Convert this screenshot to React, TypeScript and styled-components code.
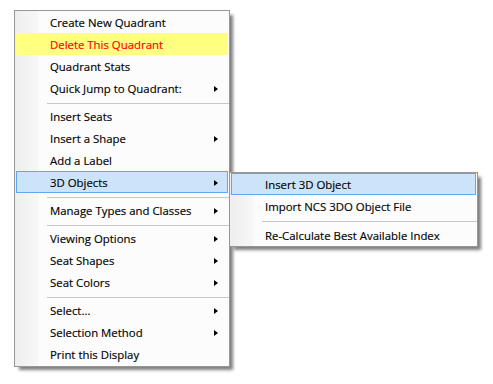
import React from "react";
import styled, { createGlobalStyle, css } from "styled-components";

const Global = createGlobalStyle`
  html, body { margin: 0; padding: 0; background: #ffffff; }
  body { width: 493px; height: 384px; overflow: hidden; }
`;

const Page = styled.div`
  padding: 10px 0 0 14px;
  font-family: "Open Sans", "Noto Sans", sans-serif;
  font-size: 11.4px;
  color: #000;
`;

const Menu = styled.div<{ $width: number; $padBottom: number }>`
  position: relative;
  box-sizing: border-box;
  width: ${(p) => p.$width}px;
  padding-bottom: ${(p) => p.$padBottom}px;
  border: 1px solid #979797;
  background: linear-gradient(to right, #eeeeee 0, #f7f7f7 23px, #fcfcfc 24px, #fcfcfc 100%);
  box-shadow: 4px 4px 3px -1px rgba(0, 0, 0, 0.5);
  display: flex;
  flex-direction: column;
`;

const SubMenu = styled(Menu)`
  position: absolute;
  top: 1px;
  left: 214px;
  z-index: 2;
`;

const Item = styled.div<{ $hl?: "yellow" | "blue" }>`
  position: relative;
  box-sizing: border-box;
  height: 22px;
  margin: 0 1px;
  padding: 0 9px 0 33px;
  border: 1px solid transparent;
  display: flex;
  align-items: center;
  justify-content: space-between;
  white-space: nowrap;
  ${(p) =>
    p.$hl === "yellow" &&
    css`
      background: #ffff80;
      border-color: #ffff80;
    `}
  ${(p) =>
    p.$hl === "blue" &&
    css`
      background: #cce4f9;
      border-color: #5fa8ef;
    `}
`;

const Label = styled.span<{ $danger?: boolean }>`
  line-height: 20px;
  padding-top: 2px;
  color: ${(p) => (p.$danger ? "#ff0000" : "#000000")};
  -webkit-text-stroke: 0.15px ${(p) => (p.$danger ? "#ff0000" : "#000000")};
`;

const Arrow = styled.span`
  width: 0;
  height: 0;
  margin-top: 1px;
  border-top: 3.5px solid transparent;
  border-bottom: 3.5px solid transparent;
  border-left: 4px solid #000;
`;

const Separator = styled.div<{ $after: number }>`
  height: 1px;
  margin: 4px 0 ${(p) => p.$after}px 32px;
  background: #c8c8c8;
`;

const Anchor = styled.div`
  position: relative;
`;

type Entry =
  | { kind: "sep" }
  | { kind: "item"; label: string; sub?: boolean; hl?: "yellow" | "blue"; danger?: boolean; children?: Entry[] };

const mainItems: Entry[] = [
  { kind: "item", label: "Create New Quadrant" },
  { kind: "item", label: "Delete This Quadrant", hl: "yellow", danger: true },
  { kind: "item", label: "Quadrant Stats" },
  { kind: "item", label: "Quick Jump to Quadrant:", sub: true },
  { kind: "sep" },
  { kind: "item", label: "Insert Seats" },
  { kind: "item", label: "Insert a Shape", sub: true },
  { kind: "item", label: "Add a Label" },
  {
    kind: "item",
    label: "3D Objects",
    sub: true,
    hl: "blue",
    children: [
      { kind: "item", label: "Insert 3D Object", hl: "blue" },
      { kind: "item", label: "Import NCS 3DO Object File" },
      { kind: "sep" },
      { kind: "item", label: "Re-Calculate Best Available Index" },
    ],
  },
  { kind: "sep" },
  { kind: "item", label: "Manage Types and Classes", sub: true },
  { kind: "sep" },
  { kind: "item", label: "Viewing Options", sub: true },
  { kind: "item", label: "Seat Shapes", sub: true },
  { kind: "item", label: "Seat Colors", sub: true },
  { kind: "sep" },
  { kind: "item", label: "Select...", sub: true },
  { kind: "item", label: "Selection Method", sub: true },
  { kind: "item", label: "Print this Display" },
];

function renderEntries(entries: Entry[], sepAfter: number) {
  return entries.map((e, i) => {
    if (e.kind === "sep") return <Separator key={i} $after={sepAfter} />;
    const row = (
      <Item key={i} $hl={e.hl}>
        <Label $danger={e.danger}>{e.label}</Label>
        {e.sub && <Arrow />}
      </Item>
    );
    if (e.children) {
      return (
        <Anchor key={i}>
          {row}
          <SubMenu $width={249} $padBottom={0}>
            {renderEntries(e.children, 2)}
          </SubMenu>
        </Anchor>
      );
    }
    return row;
  });
}

export default function App() {
  return (
    <>
      <Global />
      <Page>
        <Menu $width={216} $padBottom={1}>
          {renderEntries(mainItems, 1)}
        </Menu>
      </Page>
    </>
  );
}
